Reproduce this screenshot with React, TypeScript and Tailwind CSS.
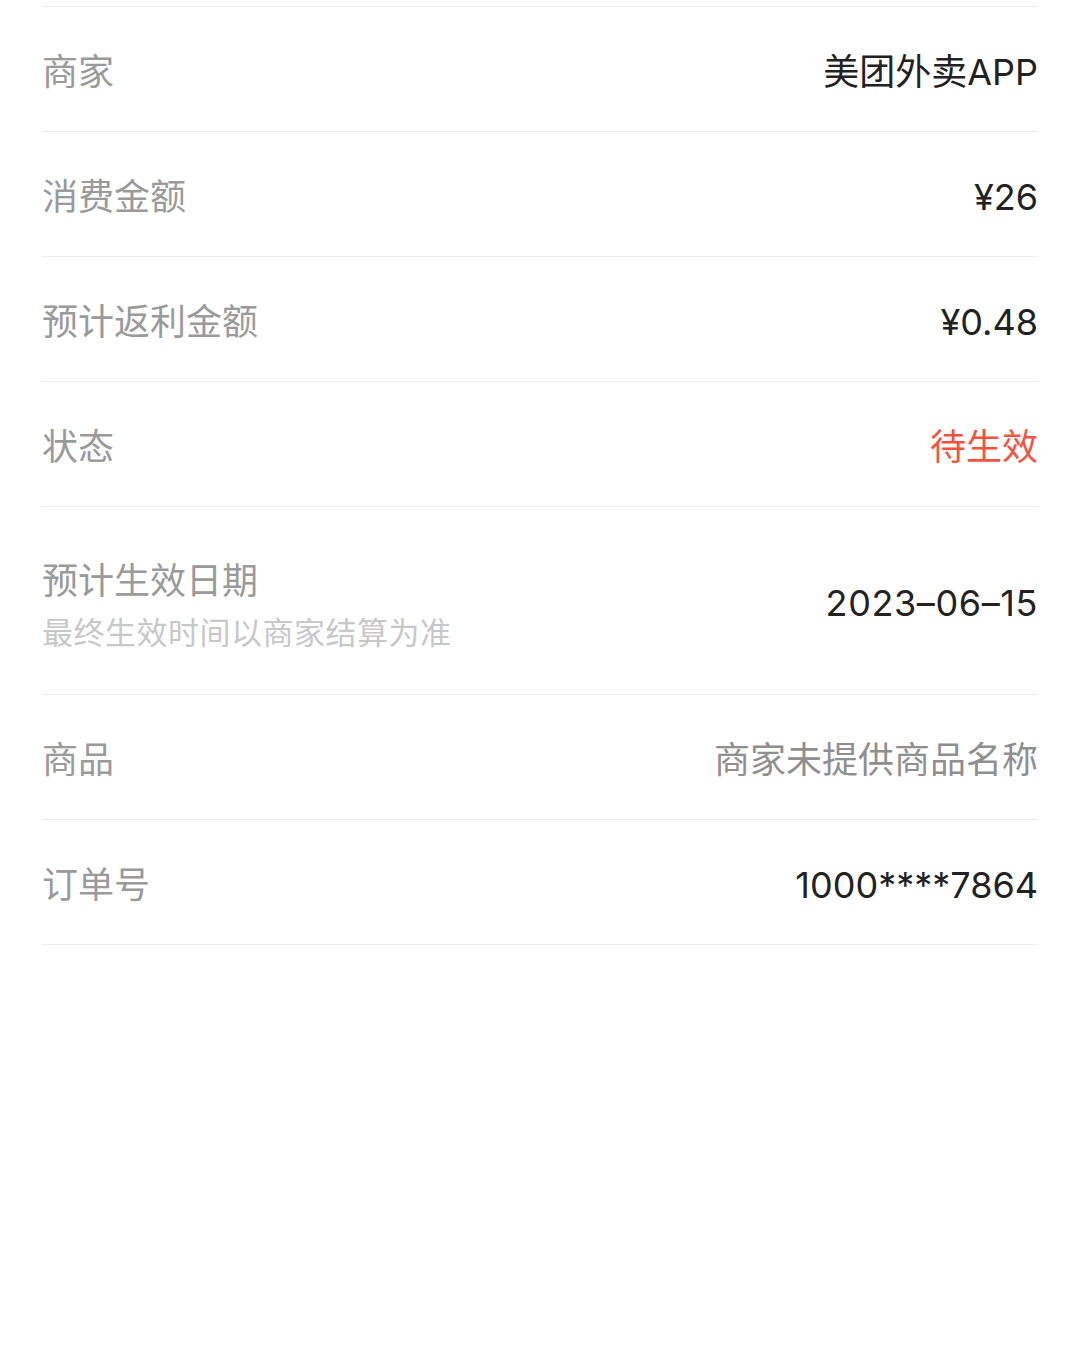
const ROWS = [
  { label: "商家", value: "美团外卖APP", tone: "dark" },
  { label: "消费金额", value: "¥26", tone: "dark" },
  { label: "预计返利金额", value: "¥0.48", tone: "dark" },
  { label: "状态", value: "待生效", tone: "red" },
  { label: "预计生效日期", sub: "最终生效时间以商家结算为准", value: "2023–06–15", tone: "dark" },
  { label: "商品", value: "商家未提供商品名称", tone: "gray" },
  { label: "订单号", value: "1000****7864", tone: "dark" },
] as const;

const TONE = {
  dark: "text-[#222222]",
  red: "text-[#f5533d]",
  gray: "text-[#8f8f8f]",
} as const;

export default function App() {
  return (
    <div
      className="min-h-[1350px] w-[1080px] bg-white px-[42px] pt-[6px]"
      style={{ fontFamily: 'Inter, "Noto Sans CJK SC", sans-serif' }}
    >
      <div className="border-t border-[#ededed]">
        {ROWS.map((row) => (
          <div
            key={row.label}
            className={`flex items-center justify-between border-b border-[#ededed] pt-[5px] ${
              "sub" in row ? "h-[188px]" : "h-[125px]"
            }`}
          >
            <div className={`flex flex-col ${"sub" in row ? "pt-[6px]" : ""}`}>
              <span className="text-[36px] leading-[44px] text-[#9a9a9a]">{row.label}</span>
              {"sub" in row ? (
                <span className="mt-[10px] text-[31px] leading-[40px] tracking-[0.5px] text-[#c8c8c8]">
                  {row.sub}
                </span>
              ) : null}
            </div>
            <span
              className={`text-[36px] leading-[44px] ${TONE[row.tone]} ${
                "sub" in row ? "tracking-[0.6px]" : ""
              }`}
            >
              {row.value}
            </span>
          </div>
        ))}
      </div>
    </div>
  );
}
